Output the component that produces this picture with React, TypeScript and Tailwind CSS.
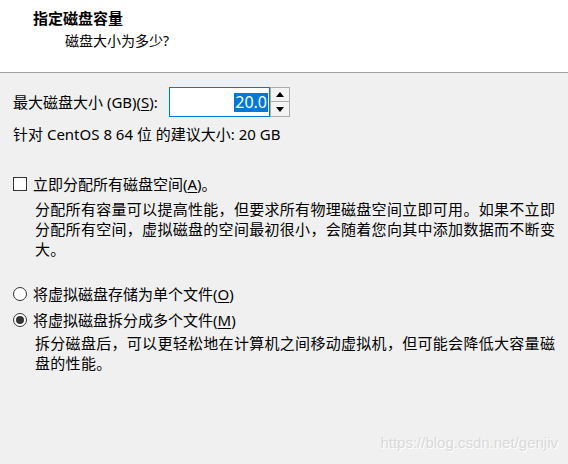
export default function App() {
  return (
    <div className="relative w-[568px] h-[464px] overflow-hidden bg-[#f0f0f0] text-black font-['Noto_Sans','Noto_Sans_CJK_SC',sans-serif]">
      {/* header */}
      <div className="h-[73px] bg-white border-b border-[#a0a0a0] pl-[33px] pt-[7px]">
        <div className="text-[15px] leading-[22px] font-bold">指定磁盘容量</div>
        <div className="pl-[32px] text-[14px] leading-[22px] mt-[1px]">磁盘大小为多少?</div>
      </div>

      <div className="pl-[13px] pr-[12px]">
        {/* size row */}
        <div className="flex items-center mt-[14px] h-[30px]">
          <label className="text-[15px] leading-[20px] w-[156px]">
            最大磁盘大小 (GB)(<span className="underline underline-offset-2">S</span>):
          </label>
          <div className="flex h-[30px]">
            <div className="w-[101px] h-[30px] bg-white border border-[#0078d7] flex items-center justify-end pr-[1px]">
              <span className="bg-[#0078d7] text-white text-[16px] leading-[19px] px-[1px]">20.0</span>
            </div>
            <div className="flex flex-col w-[20px] h-[30px]">
              <button className="h-[15px] border border-[#adadad] bg-[#f3f3f3] flex items-center justify-center">
                <svg width="8" height="5" viewBox="0 0 8 5">
                  <path d="M0 5 L4 0 L8 5 Z" fill="#000" />
                </svg>
              </button>
              <button className="h-[15px] border border-t-0 border-[#adadad] bg-[#f3f3f3] flex items-center justify-center">
                <svg width="8" height="5" viewBox="0 0 8 5">
                  <path d="M0 0 L8 0 L4 5 Z" fill="#000" />
                </svg>
              </button>
            </div>
          </div>
        </div>

        <div className="text-[15px] leading-[20px] mt-[7px]">针对 CentOS 8 64 位 的建议大小: 20 GB</div>

        {/* checkbox */}
        <div className="flex items-center mt-[30px] h-[20px]">
          <span className="w-[14px] h-[14px] border border-[#333] bg-white shrink-0" />
          <span className="ml-[6px] text-[15px] leading-[20px]">
            立即分配所有磁盘空间(<span className="underline underline-offset-2">A</span>)。
          </span>
        </div>
        <p className="pl-[22px] mt-[5px] text-[15px] leading-[20px] tracking-[0.3px]">
          分配所有容量可以提高性能，但要求所有物理磁盘空间立即可用。如果不立即分配所有空间，虚拟磁盘的空间最初很小，会随着您向其中添加数据而不断变大。
        </p>

        {/* radios */}
        <div className="flex items-center mt-[25px] h-[20px]">
          <span className="w-[14px] h-[14px] rounded-full border border-[#333] bg-white shrink-0" />
          <span className="ml-[6px] text-[15px] leading-[20px]">
            将虚拟磁盘存储为单个文件(<span className="underline underline-offset-2">O</span>)
          </span>
        </div>
        <div className="flex items-center mt-[6px] h-[20px]">
          <span className="w-[14px] h-[14px] rounded-full border border-[#333] bg-white shrink-0 flex items-center justify-center">
            <span className="w-[8px] h-[8px] rounded-full bg-[#333]" />
          </span>
          <span className="ml-[6px] text-[15px] leading-[20px]">
            将虚拟磁盘拆分成多个文件(<span className="underline underline-offset-2">M</span>)
          </span>
        </div>
        <p className="pl-[22px] mt-[3px] text-[15px] leading-[20px] tracking-[0.3px]">
          拆分磁盘后，可以更轻松地在计算机之间移动虚拟机，但可能会降低大容量磁盘的性能。
        </p>
      </div>

      {/* watermark */}
      <div className="absolute right-[10px] top-[433px] text-[15px] leading-[20px] text-[#d9d9d9] font-['Liberation_Sans',sans-serif] [text-shadow:1px_1px_0_#ffffff]">
        https://blog.csdn.net/genjiv
      </div>
    </div>
  );
}
